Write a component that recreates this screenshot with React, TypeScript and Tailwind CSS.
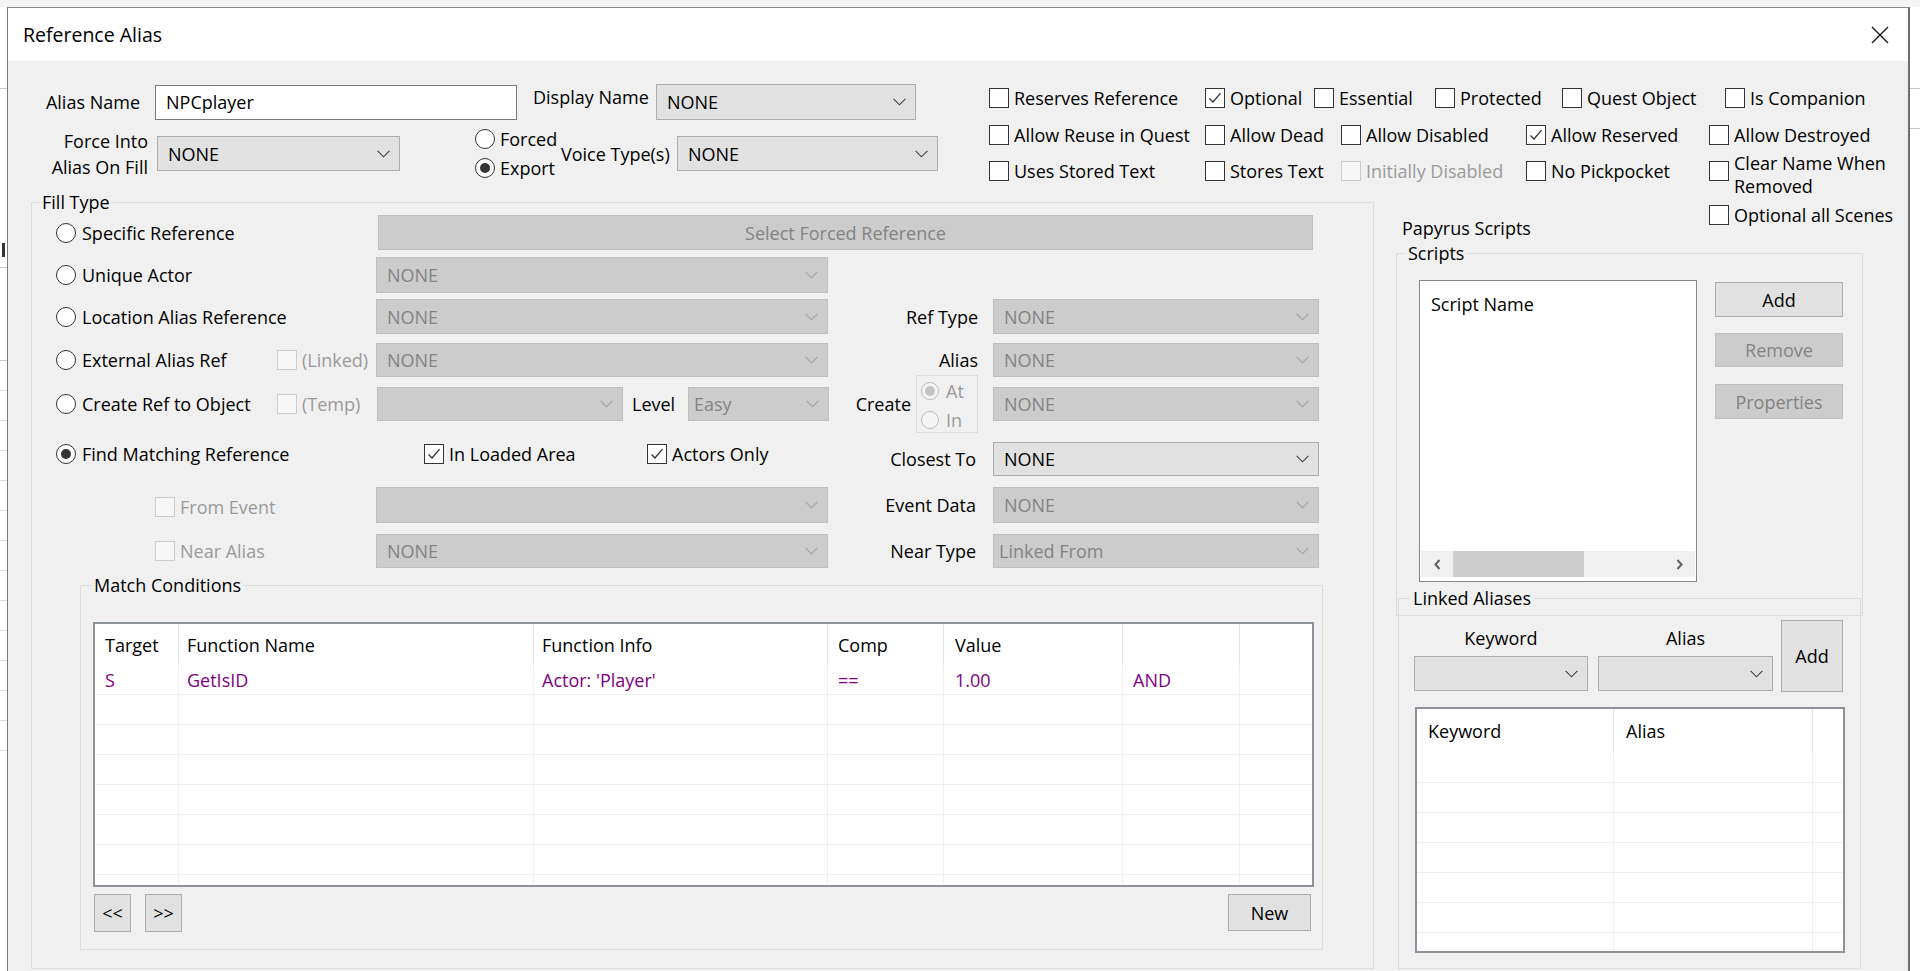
import React from "react";

interface ComboProps {
  value?: string;
  disabled?: boolean;
  className?: string;
  pad?: string;
}

function Chevron({ disabled = false }: { disabled?: boolean }) {
  return (
    <svg width="13" height="8" viewBox="0 0 13 8" className="shrink-0">
      <polyline
        points="0.6,0.8 6.5,6.8 12.4,0.8"
        fill="none"
        stroke={disabled ? "#a2a2a2" : "#404040"}
        strokeWidth="1.1"
      />
    </svg>
  );
}

function Combo({ value = "", disabled = false, className = "", pad = "pl-[10px]" }: ComboProps) {
  return (
    <div
      className={`flex items-center justify-between border shrink-0 ${
        disabled ? "bg-[#cccccc] border-[#bfbfbf] text-[#838383]" : "bg-[#e1e1e1] border-[#adadad] text-black"
      } ${className}`}
    >
      <span className={`${pad} whitespace-nowrap`}>{value}</span>
      <span className="pr-[9px] flex">
        <Chevron disabled={disabled} />
      </span>
    </div>
  );
}

function Box({ checked = false, disabled = false }: { checked?: boolean; disabled?: boolean }) {
  return (
    <span
      className={`w-[20px] h-[20px] border shrink-0 flex items-center justify-center ${
        disabled ? "border-[#cccccc] bg-[#f7f7f7]" : "border-[#333333] bg-white"
      }`}
    >
      {checked && (
        <svg width="16" height="16" viewBox="0 0 16 16">
          <polyline points="2.5,8.5 6,12 13.5,3.2" fill="none" stroke="#333" strokeWidth="1.3" />
        </svg>
      )}
    </span>
  );
}

interface CheckProps {
  label: React.ReactNode;
  checked?: boolean;
  disabled?: boolean;
  className?: string;
  labelClass?: string;
}

function Check({ label, checked, disabled, className = "", labelClass = "" }: CheckProps) {
  return (
    <div className={`flex items-center gap-[5px] shrink-0 ${className}`}>
      <Box checked={checked} disabled={disabled} />
      <span className={`whitespace-nowrap ${disabled ? "text-[#9a9a9a]" : ""} ${labelClass}`}>{label}</span>
    </div>
  );
}

function RadioDot({ checked = false, disabled = false, size = "w-[20px] h-[20px]" }: { checked?: boolean; disabled?: boolean; size?: string }) {
  return (
    <span
      className={`${size} rounded-full border shrink-0 flex items-center justify-center ${
        disabled ? "border-[#bcbcbc] bg-[#f4f4f4]" : "border-[#333333] bg-white"
      }`}
    >
      {checked && <span className={`w-[10px] h-[10px] rounded-full ${disabled ? "bg-[#c4c4c4]" : "bg-[#333333]"}`} />}
    </span>
  );
}

function RadioItem({ label, checked, className = "" }: { label: string; checked?: boolean; className?: string }) {
  return (
    <div className={`flex items-center gap-[6px] shrink-0 ${className}`}>
      <RadioDot checked={checked} />
      <span className="whitespace-nowrap">{label}</span>
    </div>
  );
}

function Btn({ children, disabled, className = "" }: { children: React.ReactNode; disabled?: boolean; className?: string }) {
  return (
    <div
      className={`flex items-center justify-center border shrink-0 ${
        disabled ? "bg-[#cccccc] border-[#bfbfbf] text-[#838383]" : "bg-[#e1e1e1] border-[#adadad]"
      } ${className}`}
    >
      {children}
    </div>
  );
}

function Group({ title, className = "", legendClass = "", children }: { title: string; className?: string; legendClass?: string; children?: React.ReactNode }) {
  return (
    <fieldset className={`border border-[#dcdcdc] shrink-0 min-w-0 ${className}`}>
      <legend className={`px-[3px] leading-[24px] ${legendClass}`}>{title}</legend>
      {children}
    </fieldset>
  );
}

function RightLabel({ children, className = "" }: { children: React.ReactNode; className?: string }) {
  return <span className={`w-[150px] text-right shrink-0 whitespace-nowrap ${className}`}>{children}</span>;
}

const mcCols = "grid grid-cols-[84px_355px_294px_116px_179px_117px_1fr]";
const mcHead = ["Target", "Function Name", "Function Info", "Comp", "Value", "", ""];
const mcPad = ["pl-[10px]", "pl-[8px]", "pl-[8px]", "pl-[10px]", "pl-[11px]", "pl-[10px]", ""];
const mcRow = ["S", "GetIsID", "Actor: 'Player'", "==", "1.00", "AND", ""];

const laCols = "grid grid-cols-[197px_199px_1fr]";

function MatchTable() {
  return (
    <div className="mt-[25px] ml-[12px] w-[1221px] h-[265px] border-2 border-[#8e939b] bg-white overflow-hidden">
      <div className={`${mcCols} h-[41px]`}>
        {mcHead.map((h, i) => (
          <div key={i} className={`flex items-center ${mcPad[i]} ${i < 6 ? "border-r border-[#e3e3e3]" : ""}`}>
            {h}
          </div>
        ))}
      </div>
      {Array.from({ length: 8 }).map((_, r) => (
        <div key={r} className={`${mcCols} h-[30px] border-b border-[#f0f0f0]`}>
          {mcRow.map((c, i) => (
            <div
              key={i}
              className={`flex items-center ${mcPad[i]} text-[#800080] ${i < 6 ? "border-r border-[#f0f0f0]" : ""}`}
            >
              {r === 0 ? c : ""}
            </div>
          ))}
        </div>
      ))}
    </div>
  );
}

function LinkedTable() {
  return (
    <div className="mt-[15px] ml-[16px] w-[430px] h-[246px] border-2 border-[#8e939b] bg-white overflow-hidden">
      <div className={`${laCols} h-[44px]`}>
        <div className="flex items-center pl-[11px] border-r border-[#e3e3e3]">Keyword</div>
        <div className="flex items-center pl-[12px] border-r border-[#e3e3e3]">Alias</div>
        <div />
      </div>
      {Array.from({ length: 7 }).map((_, r) => (
        <div key={r} className={`${laCols} h-[30px] border-b border-[#f0f0f0]`}>
          <div className="border-r border-[#f0f0f0]" />
          <div className="border-r border-[#f0f0f0]" />
          <div />
        </div>
      ))}
    </div>
  );
}

function TopSection() {
  return (
    <div className="flex h-[129px] shrink-0">
      <div className="w-[981px] shrink-0 flex flex-col">
        <div className="flex items-center h-[36px] mt-[23px]">
          <span className="w-[132px] text-right shrink-0">Alias Name</span>
          <div className="ml-[15px] w-[362px] h-[35px] bg-white border border-[#7a7a7a] flex items-center pl-[10px] shrink-0">
            NPCplayer
          </div>
          <span className="ml-[16px] w-[114px] mb-[10px] whitespace-nowrap shrink-0">Display Name</span>
          <Combo className="ml-[9px] w-[260px] h-[36px]" value="NONE" />
        </div>
        <div className="flex items-center h-[35px] mt-[16px]">
          <span className="w-[140px] text-right leading-[26px] shrink-0">
            Force Into
            <br />
            Alias On Fill
          </span>
          <Combo className="ml-[9px] w-[243px] h-[35px]" value="NONE" />
          <div className="ml-[75px] w-[86px] flex flex-col gap-[9px] shrink-0">
            <div className="flex items-center gap-[5px] h-[20px]">
              <RadioDot />
              <span>Forced</span>
            </div>
            <div className="flex items-center gap-[5px] h-[20px]">
              <RadioDot checked />
              <span>Export</span>
            </div>
          </div>
          <span className="w-[112px] whitespace-nowrap shrink-0">Voice Type(s)</span>
          <Combo className="ml-[4px] w-[261px] h-[35px]" value="NONE" />
        </div>
      </div>

      <div className="flex flex-col pt-[25px]">
        <div className="flex h-[24px] items-center">
          <Check className="w-[216px]" label="Reserves Reference" />
          <Check className="w-[109px]" checked label="Optional" />
          <Check className="w-[121px]" label="Essential" />
          <Check className="w-[127px]" label="Protected" />
          <Check className="w-[163px]" label="Quest Object" />
          <Check label="Is Companion" />
        </div>
        <div className="flex h-[24px] items-center mt-[13px]">
          <Check className="w-[216px]" label="Allow Reuse in Quest" />
          <Check className="w-[136px]" label="Allow Dead" />
          <Check className="w-[185px]" label="Allow Disabled" />
          <Check className="w-[183px]" checked label="Allow Reserved" />
          <Check label="Allow Destroyed" />
        </div>
        <div className="flex h-[24px] items-center mt-[12px]">
          <Check className="w-[216px]" label="Uses Stored Text" />
          <Check className="w-[136px]" label="Stores Text" />
          <Check className="w-[185px]" disabled label="Initially Disabled" />
          <Check className="w-[183px]" label="No Pickpocket" />
          <Check
            labelClass="leading-[23px] mt-[7px]"
            label={
              <>
                Clear Name When
                <br />
                Removed
              </>
            }
          />
        </div>
      </div>
    </div>
  );
}

function FillType() {
  return (
    <Group title="Fill Type" className="ml-[23px] w-[1343px] h-[779px]" legendClass="ml-[7px]">
      <div className="flex flex-col">
        <div className="flex items-center h-[35px] mt-[1px]">
          <div className="w-[344px] pl-[24px] flex items-center shrink-0">
            <RadioItem label="Specific Reference" />
          </div>
          <Btn disabled className="ml-[2px] w-[935px] h-[35px]">
            Select Forced Reference
          </Btn>
        </div>

        <div className="flex items-center h-[36px] mt-[7px]">
          <div className="w-[344px] pl-[24px] flex items-center shrink-0">
            <RadioItem label="Unique Actor" />
          </div>
          <Combo disabled className="w-[452px] h-[36px]" value="NONE" />
        </div>

        <div className="flex items-center h-[35px] mt-[6px]">
          <div className="w-[344px] pl-[24px] flex items-center shrink-0">
            <RadioItem label="Location Alias Reference" />
          </div>
          <Combo disabled className="w-[452px] h-[35px]" value="NONE" />
          <RightLabel>Ref Type</RightLabel>
          <Combo disabled className="ml-[15px] w-[326px] h-[35px]" value="NONE" />
        </div>

        <div className="flex items-center h-[34px] mt-[9px]">
          <div className="w-[344px] pl-[24px] flex items-center shrink-0">
            <RadioItem className="w-[221px]" label="External Alias Ref" />
            <Check disabled label="(Linked)" />
          </div>
          <Combo disabled className="w-[452px] h-[34px]" value="NONE" />
          <RightLabel>Alias</RightLabel>
          <Combo disabled className="ml-[15px] w-[326px] h-[34px]" value="NONE" />
        </div>

        <div className="flex items-center h-[34px] mt-[10px]">
          <div className="w-[344px] pl-[24px] flex items-center shrink-0">
            <RadioItem className="w-[221px]" label="Create Ref to Object" />
            <Check disabled label="(Temp)" />
          </div>
          <Combo disabled className="ml-[1px] w-[246px] h-[34px]" />
          <span className="ml-[9px] w-[46px] shrink-0">Level</span>
          <Combo disabled className="ml-[10px] w-[141px] h-[34px]" value="Easy" pad="pl-[5px]" />
          <div className="w-[149px] flex items-center justify-end shrink-0">
            <span>Create</span>
            <div className="ml-[5px] w-[62px] h-[58px] border border-[#dcdcdc] flex flex-col pl-[4px] pt-[6px] gap-[11px] shrink-0">
              <div className="flex items-center gap-[7px] h-[18px] text-[#9a9a9a]">
                <RadioDot checked disabled size="w-[18px] h-[18px]" />
                <span>At</span>
              </div>
              <div className="flex items-center gap-[7px] h-[18px] text-[#9a9a9a]">
                <RadioDot disabled size="w-[18px] h-[18px]" />
                <span>In</span>
              </div>
            </div>
          </div>
          <Combo disabled className="ml-[15px] w-[326px] h-[34px]" value="NONE" />
        </div>

        <div className="flex items-center h-[34px] mt-[21px]">
          <div className="w-[344px] pl-[24px] flex items-center shrink-0 mb-[10px]">
            <RadioItem checked label="Find Matching Reference" />
          </div>
          <div className="w-[452px] pl-[48px] flex items-center shrink-0 mb-[10px]">
            <Check className="w-[223px]" checked label="In Loaded Area" />
            <Check checked label="Actors Only" />
          </div>
          <RightLabel className="pr-[2px]">Closest To</RightLabel>
          <Combo className="ml-[15px] w-[326px] h-[34px]" value="NONE" />
        </div>

        <div className="flex items-center h-[36px] mt-[11px]">
          <div className="w-[344px] pl-[123px] flex items-center shrink-0 mt-[3px]">
            <Check disabled label="From Event" />
          </div>
          <Combo disabled className="w-[452px] h-[36px]" />
          <RightLabel className="pr-[2px]">Event Data</RightLabel>
          <Combo disabled className="ml-[15px] w-[326px] h-[36px]" value="NONE" />
        </div>

        <div className="flex items-center h-[34px] mt-[11px]">
          <div className="w-[344px] pl-[123px] flex items-center shrink-0">
            <Check disabled label="Near Alias" />
          </div>
          <Combo disabled className="w-[452px] h-[34px]" value="NONE" />
          <RightLabel className="pr-[2px]">Near Type</RightLabel>
          <Combo disabled className="ml-[15px] w-[326px] h-[34px]" value="Linked From" pad="pl-[5px]" />
        </div>

        <Group title="Match Conditions" className="ml-[48px] mt-[5px] w-[1243px] h-[377px]" legendClass="ml-[10px]">
          <MatchTable />
          <div className="flex mt-[7px] h-[38px] items-start">
            <Btn className="ml-[13px] w-[37px] h-[38px]">&lt;&lt;</Btn>
            <Btn className="ml-[14px] w-[37px] h-[38px]">&gt;&gt;</Btn>
            <Btn className="ml-auto mr-[11px] w-[83px] h-[37px]">New</Btn>
          </div>
        </Group>
      </div>
    </Group>
  );
}

function RightPanel() {
  return (
    <div className="flex-1 flex flex-col">
      <div className="flex h-[50px] shrink-0">
        <span className="self-end ml-[28px] w-[307px] shrink-0">Papyrus Scripts</span>
        <Check className="self-start mt-[13px]" label="Optional all Scenes" />
      </div>

      <Group title="Scripts" className="ml-[22px] mt-[1px] w-[467px] h-[375px]" legendClass="ml-[8px]">
        <div className="flex mt-[15px] ml-[22px]">
          <div className="w-[278px] h-[302px] bg-white border border-[#828790] flex flex-col shrink-0">
            <span className="pl-[11px] mt-[11px]">Script Name</span>
            <div className="flex-1" />
            <div className="mx-[1px] mb-[4px] h-[26px] bg-[#f0f0f0] flex items-center">
              <div className="w-[32px] flex justify-center">
                <svg width="7" height="11" viewBox="0 0 7 11">
                  <polyline points="5.5,1 1.5,5.5 5.5,10" fill="none" stroke="#606060" strokeWidth="2" />
                </svg>
              </div>
              <div className="w-[131px] h-full bg-[#cdcdcd]" />
              <div className="flex-1" />
              <div className="w-[32px] flex justify-center">
                <svg width="7" height="11" viewBox="0 0 7 11">
                  <polyline points="1.5,1 5.5,5.5 1.5,10" fill="none" stroke="#606060" strokeWidth="2" />
                </svg>
              </div>
            </div>
          </div>
          <div className="ml-[18px] flex flex-col pt-[2px]">
            <Btn className="w-[128px] h-[35px]">Add</Btn>
            <Btn disabled className="mt-[16px] w-[128px] h-[34px]">
              Remove
            </Btn>
            <Btn disabled className="mt-[17px] w-[128px] h-[35px]">
              Properties
            </Btn>
          </div>
        </div>
      </Group>

      <Group title="Linked Aliases" className="ml-[24px] -mt-[30px] w-[463px] h-[383px]" legendClass="ml-[11px]">
        <div className="flex mt-[10px] ml-[15px]">
          <div className="flex flex-col">
            <div className="flex h-[36px] items-center">
              <span className="w-[174px] text-center">Keyword</span>
              <span className="ml-[10px] w-[175px] text-center">Alias</span>
            </div>
            <div className="flex">
              <Combo className="w-[174px] h-[35px]" />
              <Combo className="ml-[10px] w-[175px] h-[35px]" />
            </div>
          </div>
          <Btn className="ml-[8px] w-[62px] h-[72px]">Add</Btn>
        </div>
        <LinkedTable />
      </Group>
    </div>
  );
}

function LeftStrip() {
  return (
    <div className="w-[7px] shrink-0 bg-white flex flex-col">
      <div className="h-[81px]" />
      <div className="h-[1px] bg-[#c8c8c8]" />
      <div className="h-[154px]" />
      <div className="h-[14px] w-[3px] ml-[2px] bg-[#333333]" />
      <div className="h-[10px]" />
      <div className="h-[1px] bg-[#c8c8c8]" />
      <div className="h-[92px]" />
      <div className="h-[1px] bg-[#c8c8c8]" />
      {Array.from({ length: 13 }).map((_, i) => (
        <div key={i} className="h-[30px] border-b border-[#e3e3e3] shrink-0" />
      ))}
    </div>
  );
}

function RightStrip() {
  return (
    <div className="flex-1 bg-white flex flex-col">
      <div className="h-[81px]" />
      <div className="h-[1px] bg-[#c8c8c8]" />
      <div className="h-[39px]" />
      <div className="h-[1px] bg-[#c8c8c8]" />
    </div>
  );
}

export default function App() {
  return (
    <div className="w-[1920px] h-[971px] overflow-hidden flex flex-col bg-[#f4f4f4] font-['Open_Sans',sans-serif] text-[18px] leading-[24px] text-black">
      <div className="h-[7px] shrink-0 bg-[#f4f4f4]" />
      <div className="flex flex-1 min-h-0">
        <LeftStrip />
        <div className="w-[1903px] shrink-0 flex flex-col border-l border-t border-r-2 border-l-[#7a7a7a] border-t-[#8a8a8a] border-r-[#6e6e6e]">
          <div className="h-[53px] shrink-0 bg-white flex items-center justify-between pl-[15px] pr-[19px]">
            <span className="text-[19.5px]">Reference Alias</span>
            <svg width="18" height="18" viewBox="0 0 18 18">
              <path d="M1 1L17 17M17 1L1 17" stroke="#111" strokeWidth="1.3" />
            </svg>
          </div>
          <div className="flex-1 bg-[#f0f0f0] flex flex-col">
            <TopSection />
            <div className="flex flex-1">
              <FillType />
              <RightPanel />
            </div>
          </div>
        </div>
        <RightStrip />
      </div>
    </div>
  );
}
